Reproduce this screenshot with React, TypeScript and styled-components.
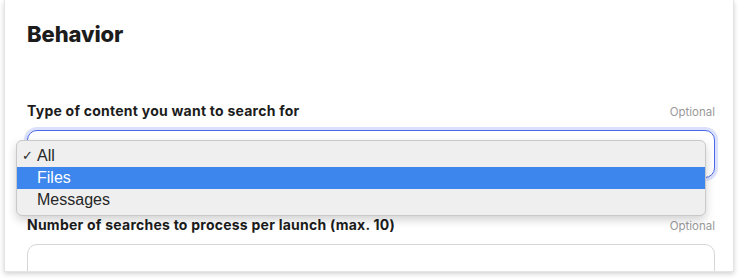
import React from "react";
import styled, { createGlobalStyle } from "styled-components";

const Global = createGlobalStyle`
  html, body { margin: 0; padding: 0; background: #ffffff; }
  body { font-family: Inter, "Noto Sans", sans-serif; }
`;

const Page = styled.div`
  position: relative;
  width: 738px;
  height: 280px;
  overflow: hidden;
`;

const Card = styled.div`
  box-sizing: border-box;
  margin: 0 4px;
  width: 730px;
  height: 272px;
  padding: 19px 18px 0 22px;
  border: 1px solid #e4e4e4;
  border-top: none;
  background: #fff;
  box-shadow: 0 2px 5px rgba(0, 0, 0, 0.18);
  overflow: hidden;
`;

const Heading = styled.h2`
  margin: 0;
  font-size: 22px;
  line-height: 30px;
  font-weight: 800;
  color: #1c1c1c;
  letter-spacing: -0.1px;
`;

const Field = styled.div<{ $top: number }>`
  margin-top: ${(p) => p.$top}px;
`;

const LabelRow = styled.div`
  display: flex;
  justify-content: space-between;
  align-items: baseline;
  height: 18px;
`;

const Label = styled.label`
  font-size: 14px;
  font-weight: 700;
  color: #1c1c1c;
  letter-spacing: 0.24px;
`;

const Optional = styled.span`
  font-size: 11.5px;
  color: #9a9a9a;
`;

const Box = styled.div<{ $focused?: boolean; $gap: number }>`
  box-sizing: border-box;
  margin-top: ${(p) => p.$gap}px;
  height: 48px;
  border-radius: 10px;
  background: #fff;
  border: ${(p) => (p.$focused ? "1.5px solid #4b68e8" : "1px solid #d6d6d6")};
  box-shadow: ${(p) => (p.$focused ? "0 0 0 3px rgba(90, 120, 240, 0.22)" : "none")};
`;

const Menu = styled.ul`
  position: absolute;
  left: 16px;
  top: 140px;
  width: 690px;
  box-sizing: border-box;
  margin: 0;
  padding: 4px 0 4px;
  list-style: none;
  background: #efefef;
  border: 1px solid #c9c9c9;
  border-radius: 6px;
  box-shadow: 0 4px 10px rgba(0, 0, 0, 0.18);
  font-family: "Liberation Sans", Arial, sans-serif;
`;

const Item = styled.li<{ $active?: boolean }>`
  position: relative;
  height: 22px;
  line-height: 22px;
  padding-left: 20px;
  font-size: 16px;
  color: ${(p) => (p.$active ? "#ffffff" : "#262626")};
  background: ${(p) => (p.$active ? "#3c86ed" : "transparent")};
`;

const Check = styled.span`
  position: absolute;
  left: 5px;
  top: 0;
  font-size: 13px;
`;

export default function App() {
  return (
    <Page>
      <Global />
      <Card>
        <Heading>Behavior</Heading>
        <Field $top={53}>
          <LabelRow>
            <Label>Type of content you want to search for</Label>
            <Optional>Optional</Optional>
          </LabelRow>
          <Box $focused $gap={10} />
        </Field>
        <Field $top={38}>
          <LabelRow>
            <Label>Number of searches to process per launch (max. 10)</Label>
            <Optional>Optional</Optional>
          </LabelRow>
          <Box $gap={10} />
        </Field>
      </Card>
      <Menu>
        <Item>
          <Check>✓</Check>All
        </Item>
        <Item $active>Files</Item>
        <Item>Messages</Item>
      </Menu>
    </Page>
  );
}
